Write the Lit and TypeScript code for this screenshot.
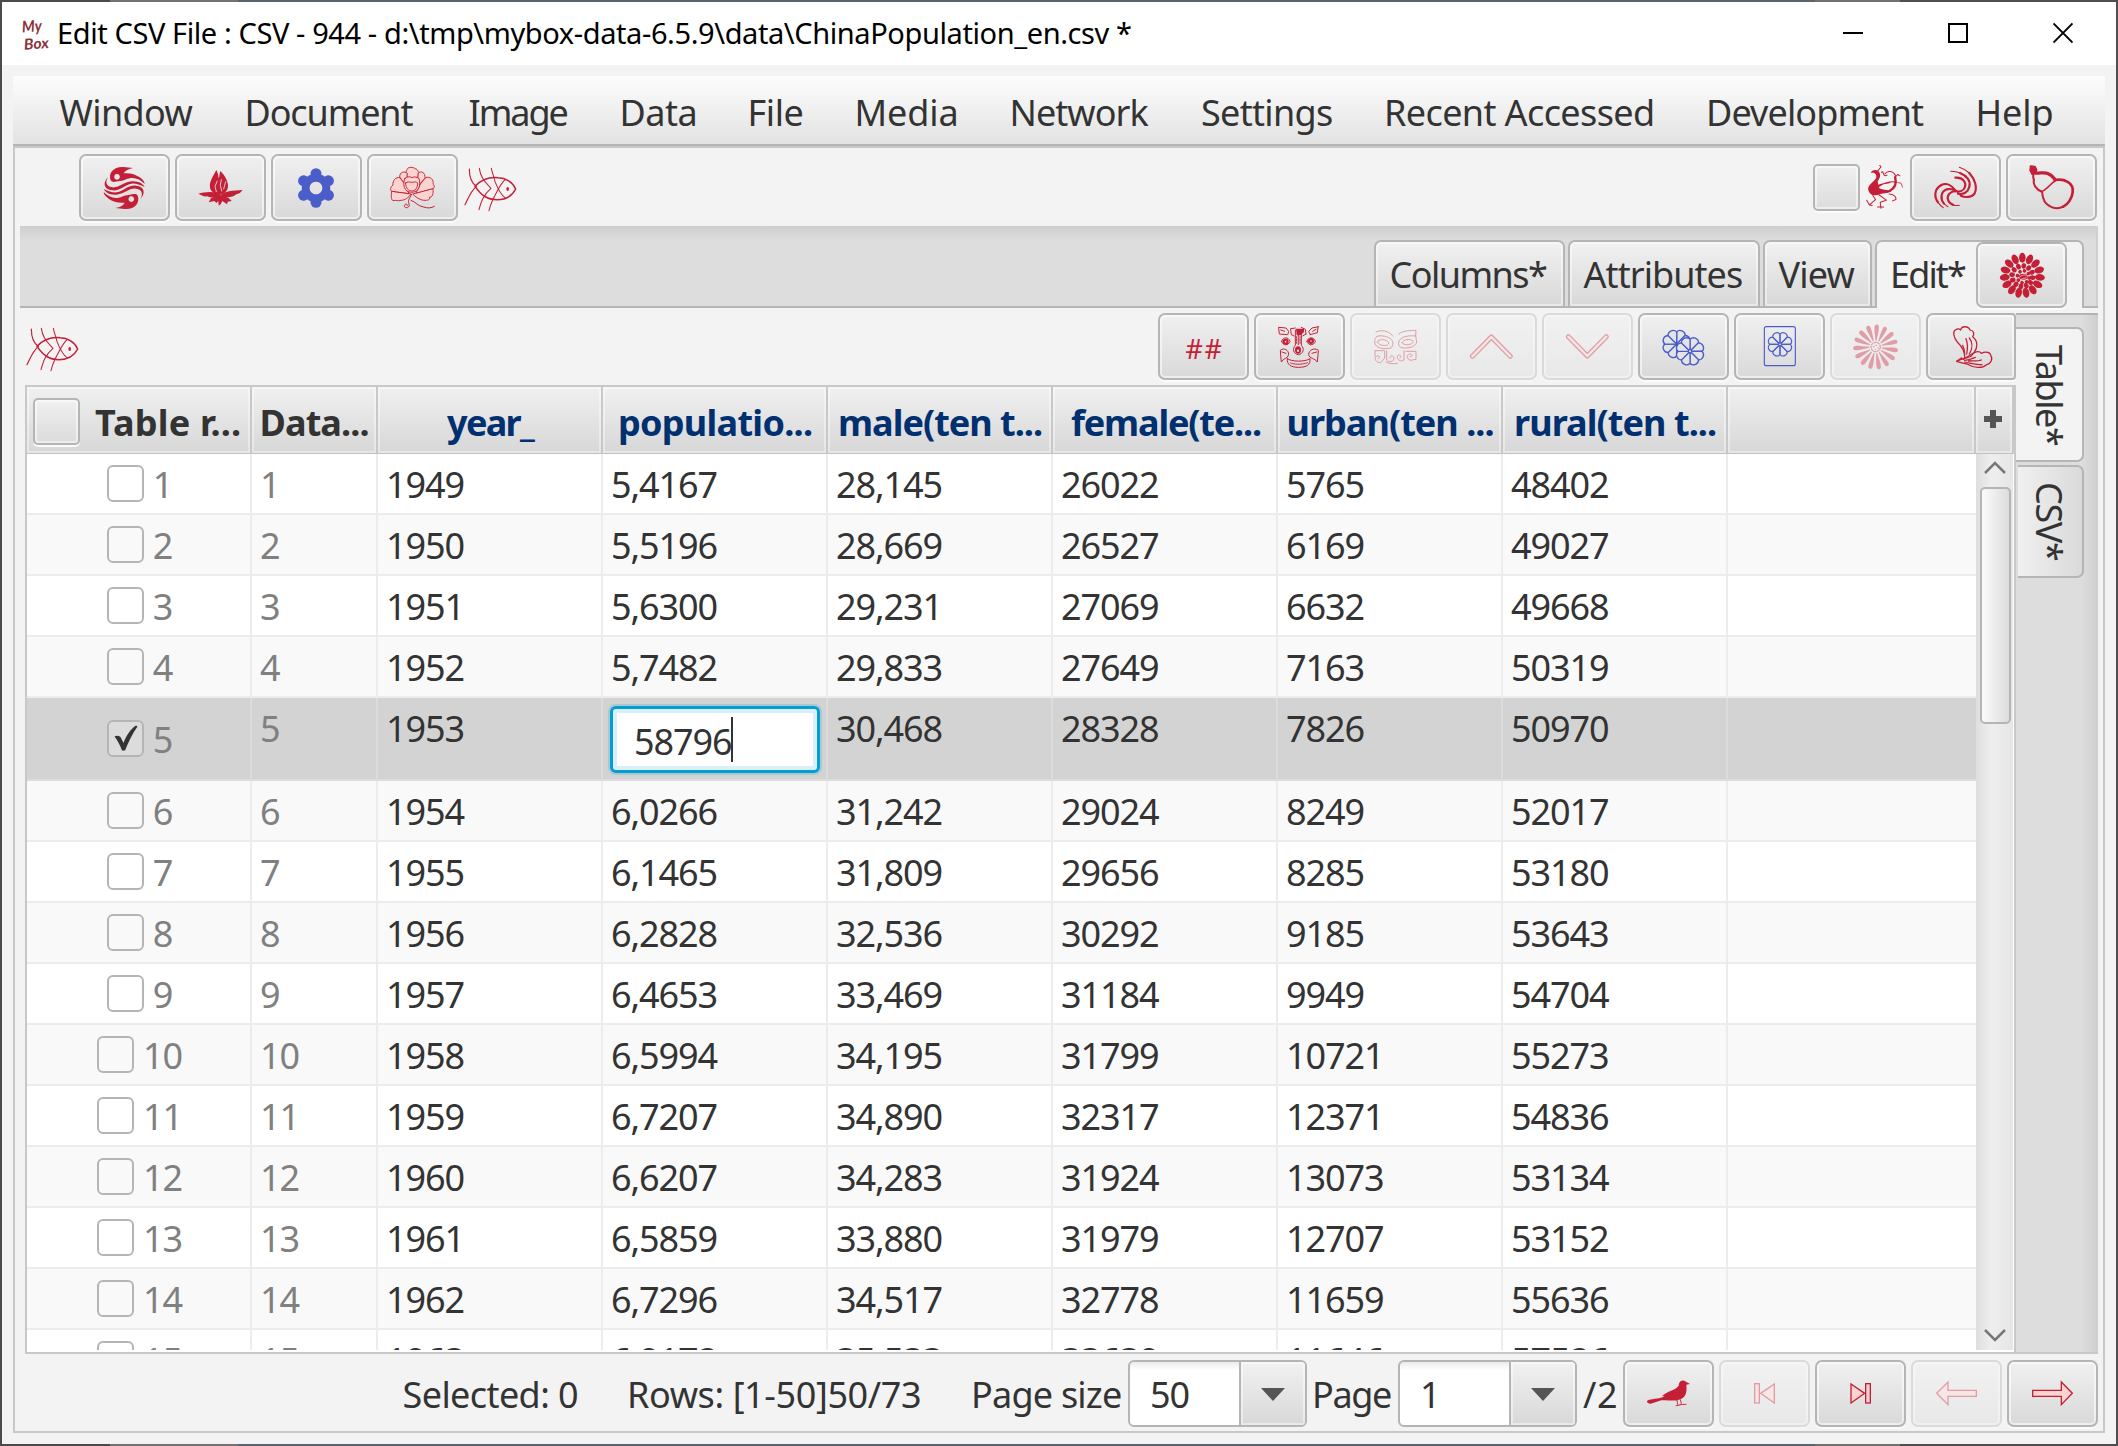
import { LitElement, html, svg, css } from "lit";
import { customElement } from "lit/decorators.js";
import { styleMap } from "lit/directives/style-map.js";
import { classMap } from "lit/directives/class-map.js";

const RED = "#c41f36";
const BLUE = "#4b5dc9";
const FAMILY = `"Noto Sans", "Open Sans", sans-serif`;
const pen = document.createElement("canvas").getContext("2d")!;

/** Text whose ink is spread over exactly `w` pixels. */
function fit(text: string, w: number, size = 36, weight = 400) {
  pen.font = `${weight} ${size}px ${FAMILY}`;
  const m = pen.measureText(text);
  const ink = m.actualBoundingBoxLeft + m.actualBoundingBoxRight;
  const ls = text.length > 1 ? (w - ink) / (text.length - 1) : 0;
  return html`<span class="fit" style=${styleMap({
    "inline-size": `${w}px`,
    "letter-spacing": `${ls.toFixed(3)}px`,
    "text-indent": `${m.actualBoundingBoxLeft.toFixed(2)}px`,
    "font-size": `${size}px`,
    "font-weight": `${weight}`,
  })}>${text}</span>`;
}

const ring = (n: number, cx: number, cy: number, draw: any, off = 0) =>
  Array.from({ length: n }, (_, i) => svg`<g transform="rotate(${off + (i * 360) / n} ${cx} ${cy})">${draw}</g>`);

const pic = (box: string, body: any, cls = "glyph") =>
  html`<svg class=${cls} viewBox=${box} fill="none" stroke=${RED} stroke-linecap="round" stroke-linejoin="round">${body}</svg>`;

const swirlHalf = svg`<path fill-rule="evenodd" d="M123 106C115 84 132 64 162 66L190 69C174 72 165 78 162 85C180 83 198 88 210 97C219 104 224 108 225 117C214 106 202 99 188 99C172 99 166 107 150 108C138 110 128 114 123 106ZM142 87a8.500 8.500 0 1 0 .1 0Z"/><path d="M116 96C106 108 108 125 128 127C150 129 160 111 186 109C206 107 221 117 225 126C210 119 198 115 186 116C164 119 154 138 128 136C102 135 98 111 116 96Z"/>`;

const wedge = (cx: number, cy: number, x: number, y: number, r: number) =>
  svg`<path d="M${cx} ${cy}L${cx - x} ${cy - y}A${r} ${r} 0 0 1 ${cx + x} ${cy - y}Z"/>`;

const petalP = "#fbd3cf";
const icons = {
  swirl: pic("28 27 273 201", svg`<g fill=${RED} stroke="none">${swirlHalf}<g transform="rotate(180 163.5 129)">${swirlHalf}</g></g>`),
  leaf: pic("316 27 273 201", svg`<g fill=${RED} stroke="none"><path d="M440 75C432 92 418 108 421 128C424 142 440 150 450 150C464 148 476 138 475 120C473 102 462 88 452 78C449 84 450 96 447 100C446 90 443 80 440 75Z"/><path d="M452 152C440 137 408 140 386 146C396 150 400 155 412 154C424 160 440 160 452 152Z"/><path d="M452 152C462 139 490 136 519 135C514 142 508 147 500 148C490 158 466 160 452 152Z"/><path d="M450 150L424 160L417 172L434 168L440 174L446 168L447 182L453 178L458 168L472 178L474 170L486 168L476 158Z"/></g><path stroke="#e8e6e6" stroke-width="2.5" d="M440 140L436 124L443 108M456 138L452 120L455 104M462 132L468 110"/>`),
  gear: pic("604 27 273 201", svg`<g fill=${BLUE} stroke="none">${ring(6, 739, 129, svg`<circle cx="739" cy="86" r="16.5"/>`)}<path fill-rule="evenodd" d="M739 86a43 43 0 1 0 .1 0ZM739 110a19 19 0 1 1 -.1 0Z"/></g>`),
  peony: pic("892 27 273 201", svg`<g fill=${petalP} stroke-width="2.8"><path d="M1010 90C1006 76 1014 74 1014 70C1022 64 1034 68 1036 71C1046 72 1048 84 1046 94L1028 118Z"/><path d="M1012 84C1004 78 990 80 990 96L1010 124Z"/><path d="M1046 84C1054 76 1068 82 1066 100L1044 124Z"/><path d="M990 98C978 94 968 108 970 120C960 128 962 134 966 140L1018 146L1004 116Z"/><path d="M1068 98C1080 92 1094 104 1090 118C1096 122 1094 128 1090 132L1038 146L1052 118Z"/><path d="M966 140C964 152 964 164 970 167C982 164 984 170 994 166C1006 166 1016 158 1024 148Z"/><path d="M1090 132C1092 146 1088 158 1080 156C1082 166 1072 166 1066 166C1054 166 1042 160 1030 148Z"/><path d="M1006 100C998 116 1002 142 1026 142C1048 142 1054 120 1048 100C1040 96 1034 94 1027 98C1020 94 1012 94 1006 100Z"/><path d="M1008 114C1014 108 1020 112 1026 112C1034 112 1038 108 1044 114C1044 130 1036 138 1027 138C1016 138 1008 130 1008 114Z"/></g><path stroke-width="3" d="M1026 148C1018 162 1014 168 1018 176C1022 188 1008 192 1004 184C1004 176 1014 174 1013 182M1024 166C1038 170 1044 184 1062 186C1074 190 1084 190 1094 184"/>`),
  fish: pic("1183 66 159 134", svg`<path stroke-width="4.6" d="M1216 124C1238 100 1262 96 1285 98C1308 98 1330 112 1338 132C1328 152 1312 164 1282 164C1252 164 1234 150 1216 124Z"/><path stroke-width="3.6" d="M1199 72C1199 98 1208 116 1220 124C1202 140 1196 160 1186 179"/><path stroke-width="3.1" d="M1229 70C1232 92 1240 106 1264 130C1240 150 1234 172 1228 194M1265 70C1268 86 1274 96 1276 110C1284 130 1294 150 1306 158M1306 104C1288 122 1280 146 1270 162C1264 176 1260 188 1258 197"/><ellipse cx="1314" cy="132" rx="4" ry="6" fill=${RED} stroke="none"/>`, "fish"),
  phoenix: pic("198 62 109 130", svg`<path fill=${RED} stroke="none" d="M212 86C214 76 228 74 234 80C246 92 236 104 232 112C236 118 232 126 240 132C252 136 264 136 274 138C268 146 250 144 240 148C222 156 206 150 204 132C206 118 222 112 228 100C230 90 224 82 212 86Z"/><path stroke-width="3" d="M232 80L242 68L238 62M244 84C250 74 246 100 260 92M254 88C262 76 280 80 286 96M286 96L292 90L298 94M222 134C244 120 262 108 282 112M228 128C240 112 262 120 272 112M266 148C280 148 288 156 286 164L276 168M218 152L226 164L208 180L200 166M208 180L216 182M236 150L258 166L240 172L242 190M232 186L250 186"/><path stroke-width="2.4" stroke-dasharray="8 3" d="M282 112L302 116L306 128"/><path stroke-width="7" d="M284 98C288 114 284 130 268 138"/>`, "phoenix"),
  whirl: pic("330 27 273 201", svg`<path stroke-width="6.500" d="M466 98C490 96 500 114 494 128C490 138 478 142 464 138M474 146C490 150 504 142 508 125C513 108 500 92 480 84M482 152C496 158 516 158 524 145C532 128 526 104 508 84M466 136C456 122 440 112 424 120C402 132 402 156 414 172M470 138C462 134 452 130 440 133C422 140 420 162 432 176M474 140C466 138 456 138 448 146C438 158 444 174 460 180"/><path stroke-width="3.200" d="M508 84C500 76 490 71 478 67M480 84C472 80 462 79 452 79M414 172C418 178 424 184 430 188M432 176C436 180 440 183 444 185M460 180C466 182 472 182 478 181"/>`),
  gourd: pic("618 27 273 201", svg`<path fill=${RED} stroke-width="4" d="M691 63L705 64L710 74L708 86L696 88L690 76Z"/><path stroke-width="10" stroke-linecap="butt" d="M706 84C718 86 734 80 744 86C756 90 760 98 766 105"/><path stroke-width="8" d="M764 105C792 100 822 112 818 142C816 160 804 178 790 185"/><path stroke-width="6" d="M790 184C770 198 736 184 730 160C726 150 728 144 726 140C708 134 698 118 702 104C698 98 700 92 700 88"/><path stroke-width="5" d="M724 140C742 134 750 116 766 107"/>`),
  mask: pic("372 249 273 201", svg`<g stroke-width="3"><path d="M446 292L468 294L476 304L474 312M446 294L448 312L472 314M452 300L464 304M566 290L546 294L536 304L540 312M564 292L562 308L540 314M558 298L548 304M482 296L496 294M514 292L526 298L528 312M482 298L484 314L492 318M528 312L518 318"/><path d="M496 300L496 346C486 356 490 372 505 374C520 372 524 356 514 346L514 300"/><path stroke-dasharray="5 3" d="M505 300L505 344M500 320L500 340M510 320L510 340"/><path d="M455 334C458 320 476 320 480 334C476 348 458 348 455 334ZM531 334C534 320 552 320 556 334C552 348 534 348 531 334Z"/><path d="M452 360C462 352 476 360 476 374C474 386 460 384 454 396L452 376ZM564 360C552 352 536 360 536 374C538 386 554 384 562 396L564 376ZM456 366L468 370M560 366L546 370M472 386C484 396 526 396 540 386C542 404 530 412 506 412C482 412 470 404 472 386Z"/><path stroke-dasharray="6 3" d="M482 399C494 404 518 404 532 398"/></g><g fill=${RED} stroke="none"><circle cx="467" cy="335" r="9"/><circle cx="543" cy="333" r="9"/><ellipse cx="504" cy="360" rx="9" ry="11"/><path d="M498 296H522V306L512 316H500Z"/></g><g fill="#e6e6e6" stroke="none"><circle cx="467" cy="335" r="2.500"/><circle cx="543" cy="333" r="2.500"/><circle cx="504" cy="362" r="3.5"/></g>`),
  eyes: pic("660 249 273 201", svg`<path stroke-width="3" d="M738 306C752 298 778 302 788 318M782 354C764 358 744 356 736 344C732 332 734 322 744 318C760 316 780 320 788 334C790 344 788 350 782 354M742 336C744 326 770 326 776 338C778 350 748 350 742 336M806 312C822 300 842 302 858 301L857 318M857 318C838 316 812 318 806 336C804 350 812 354 824 354C842 354 858 348 860 336C858 326 858 320 857 318M816 338C818 328 842 324 850 334C848 346 820 348 816 338M735 362L735 378M735 362H764V384L752 398C738 398 730 386 740 378C750 376 752 384 745 386M770 362V390C776 398 792 396 792 384C790 374 778 376 780 384M828 364H858V388L840 391C828 386 830 370 842 372C850 374 846 382 840 380M822 362V390C812 396 800 390 802 378C808 370 816 378 810 384M768 396C776 402 790 402 802 400"/>`),
  up: pic("948 249 273 201", svg`<path stroke-width="15" d="M1027 379L1084 321L1141 379"/><path stroke="#fbd9d4" stroke-width="7" d="M1027 379L1084 321L1141 379"/>`),
  down: pic("1236 249 273 201", svg`<path stroke-width="15" d="M1315 320L1372 378L1429 320"/><path stroke="#fbd9d4" stroke-width="7" d="M1315 320L1372 378L1429 320"/>`),
  copy: pic("54 249 273 201", svg`<g stroke=${BLUE} stroke-width="4" fill="#e4e4e6">${ring(8, 170, 342, wedge(170, 342, 14, 33, 15), 22.5)}${ring(8, 210, 364, wedge(210, 364, 14, 33, 15), 22.5)}<circle cx="210" cy="364" r="5"/></g>`),
  card: pic("342 249 273 201", svg`<g stroke=${BLUE} stroke-width="3.4"><rect x="433" y="290" width="93" height="117" rx="6"/>${ring(8, 480, 343, wedge(480, 343, 11.8, 28.5, 12.6), 22.5)}<circle cx="480" cy="343" r="4.500" fill="#e4e4e6"/></g>`),
  daisy: pic("630 249 273 201", svg`${ring(15, 767, 351, svg`<path fill=${RED} stroke="none" d="M765.500 332C764 318 759.500 304 760.500 290C762 281 772 281 773.500 290C774.500 304 770 318 768.500 332Z"/>`, 3)}<circle cx="767" cy="351" r="14" stroke-width="3.5" stroke-dasharray="6 4"/><path stroke-width="3.500" d="M760 350H762M768 346H770M774 354H776M766 358H767"/>`),
  petals: pic("918 249 273 201", svg`<g stroke-width="3.8"><path d="M1034 384C1036 366 1026 350 1012 336C1000 322 998 304 1006 300C1014 294 1020 298 1022 300C1024 288 1044 286 1050 300C1062 302 1064 312 1058 320C1074 332 1074 352 1062 368L1036 384"/><path d="M1034 372C1034 360 1030 350 1028 346M1040 372C1044 352 1042 336 1038 326M1048 372C1060 352 1056 334 1048 324"/><path d="M1010 394C1030 384 1040 386 1054 378C1060 364 1078 362 1084 370C1098 362 1112 368 1112 376C1120 386 1112 402 1100 404C1086 416 1062 414 1046 404C1034 400 1020 398 1010 394Z"/><path d="M1034 391C1048 390 1056 386 1066 382M1034 396C1056 400 1070 404 1086 404M1046 393C1060 392 1074 394 1084 390"/><path d="M1010 394L1024 384L1032 388"/></g>`),
  chrys: pic("1068 36 273 198", svg`<g fill=${RED} stroke="none">${ring(15, 1207, 135, svg`<ellipse cx="1207" cy="82" rx="9.800" ry="15"/>`)}${ring(12, 1207, 137, svg`<ellipse cx="1207" cy="106" rx="7" ry="8.500"/>`, 8)}${ring(8, 1210, 139, svg`<ellipse cx="1210" cy="121" rx="5.500" ry="5.500"/>`, 12)}<ellipse cx="1210" cy="139" rx="13" ry="9"/></g><path stroke="#eedcdc" stroke-width="2" d="M1200 140C1204 132 1216 132 1220 136M1204 146L1218 142"/>`),
  crow: pic("69 63 273 201", svg`<path fill=${RED} stroke="none" d="M141 186C152 178 176 182 194 172L186 171C202 156 226 154 236 140C236 126 248 120 258 128L270 135L259 137C262 160 256 178 236 182C222 188 204 182 184 184L152 194C144 194 140 190 141 186Z"/><path stroke-width="2.6" stroke-dasharray="6 2" d="M231 182L233 198M228 200L240 198M241 182L244 194M240 197L258 196"/>`),
  first: pic("357 63 273 201", svg`<g fill="#fbd3cf" stroke-width="4" stroke-linejoin="miter"><rect x="464" y="134" width="14" height="58"/><path d="M523 135V192L482 163Z"/></g>`),
  last: pic("645 63 273 201", svg`<g fill="#fbd3cf" stroke-width="4" stroke-linejoin="miter"><path d="M753 135V192L794 163Z"/><rect x="797" y="134" width="14" height="58"/></g>`),
  prev: pic("933 63 273 201", svg`<path fill="#fbd3cf" stroke-width="4" stroke-linejoin="miter" d="M1010 163L1044 129V154H1129V172H1044V197Z"/>`),
  next: pic("1221 63 273 201", svg`<path fill="#fbd3cf" stroke-width="4" stroke-linejoin="miter" d="M1417 163L1384 129V154H1298V172H1384V197Z"/>`),
};

const MENU: [string, number, number][] = [
  ["Window", 133, 0], ["Document", 166, 55], ["Image", 98, 56], ["Data", 73, 55], ["File", 52, 55], ["Media", 99, 55],
  ["Network", 136, 56], ["Settings", 130, 53.5], ["Recent Accessed", 266, 55], ["Development", 215, 56], ["Help", 74, 54.5],
];

const HEADS: [string, number][] = [
  ["year_", 88], ["populatio...", 192], ["male(ten t...", 202], ["female(te...", 190], ["urban(ten ...", 205], ["rural(ten t...", 200],
];

const ROWS = [
  ["1949", "5,4167", "28,145", "26022", "5765", "48402"],
  ["1950", "5,5196", "28,669", "26527", "6169", "49027"],
  ["1951", "5,6300", "29,231", "27069", "6632", "49668"],
  ["1952", "5,7482", "29,833", "27649", "7163", "50319"],
  ["1953", "58796", "30,468", "28328", "7826", "50970"],
  ["1954", "6,0266", "31,242", "29024", "8249", "52017"],
  ["1955", "6,1465", "31,809", "29656", "8285", "53180"],
  ["1956", "6,2828", "32,536", "30292", "9185", "53643"],
  ["1957", "6,4653", "33,469", "31184", "9949", "54704"],
  ["1958", "6,5994", "34,195", "31799", "10721", "55273"],
  ["1959", "6,7207", "34,890", "32317", "12371", "54836"],
  ["1960", "6,6207", "34,283", "31924", "13073", "53134"],
  ["1961", "6,5859", "33,880", "31979", "12707", "53152"],
  ["1962", "6,7296", "34,517", "32778", "11659", "55636"],
  ["1963", "6,9172", "35,533", "33639", "11646", "57526"],
];
const EDITED = 4;

@customElement("app-root")
export class AppRoot extends LitElement {
  static styles = css`
    :host { display: block; width: 2118px; height: 1446px; overflow: hidden; font-family: "Noto Sans", "Open Sans", sans-serif; font-size: 36px; color: #333; line-height: 49px;
      background: linear-gradient(90deg, #4c4a4b 0 110px, #757172 110px 238px, #5a646e 238px 1815px, #747070 1815px 1900px, #504e4f 1900px); }
    * { box-sizing: border-box; }
    .fit { display: inline-block; white-space: pre; flex: none; }
    .desk { padding: 2px; height: 1446px; }
    .win { height: 1442px; background: #f3f3f3; display: flex; flex-direction: column; }
    .title { height: 63px; background: #fff; display: flex; align-items: center; padding: 0 43px 0 18px; color: #000; flex: none; }
    .logo { width: 30px; height: 36px; margin: 0 9px 0 0; flex: none; overflow: visible; }
    .title .fit { margin-top: -3px; }
    .controls { margin-left: auto; display: flex; gap: 85px; margin-top: -2px; }
    .controls svg { width: 20px; height: 22px; display: block; }
    .body { padding: 11px 11px; display: flex; flex-direction: column; flex: 1; min-height: 0; }
    .menu { height: 70px; flex: none; display: flex; align-items: flex-start; padding: 12px 0 0 46.5px; background: linear-gradient(#fdfdfd, #e3e3e3 97%); border-bottom: 2px solid #b5b5b5; }
    .menu .fit { margin-left: var(--gap); }
    .panel { flex: 1; min-height: 0; border: 2px solid #c8c8c8; padding: 0 5px; display: flex; flex-direction: column; }
    .tools { height: 78px; flex: none; display: flex; align-items: flex-start; gap: 5px; padding: 6px 1px 0 59px; }
    .btn { width: 91px; height: 67px; flex: none; border-radius: 7px; display: flex; align-items: center; justify-content: center; background: linear-gradient(#f1f1f1, #d8d8d8);
      box-shadow: inset 0 0 0 2px #b5b5b5, inset 0 0 0 4px rgba(255,255,255,.55), 0 2px 0 #fbfbfb; }
    .btn.off { opacity: .4; }
    .glyph { width: 91px; height: 67px; display: block; flex: none; }
    .hash { color: #c41f36; display: flex; padding-top: 3px; }
    .fish { width: 53px; height: 44.7px; margin: 13px 0 0 19px; flex: none; }
    .tools .fish { margin: 13px 0 0 1px; }
    .tools .sel { margin: 10px 0 0 auto; }
    .sel { width: 47px; height: 47px; flex: none; border-radius: 5px; background: linear-gradient(#f1f1f1, #dadada); box-shadow: inset 0 0 0 2px #b5b5b5, inset 0 0 0 4px rgba(255,255,255,.5), 0 2px 0 #fbfbfb; }
    .phoenix { width: 37px; height: 44px; margin: 11px 2px 0 1px; }
    .tabs { height: 82px; flex: none; display: flex; justify-content: flex-end; align-items: flex-end; gap: 3px; padding-right: 14.5px; background: linear-gradient(#cecece, #dddddd 14px); box-shadow: inset 0 -2px 0 #b5b5b5, inset -2px 0 0 #cfcfcf; }
    .tab { height: 68px; flex: none; border: 2px solid #b5b5b5; border-radius: 7px 7px 0 0; background: linear-gradient(#f1f1f1, #d8d8d8); box-shadow: inset 0 0 0 2px rgba(255,255,255,.45); display: flex; padding: 8px 15.5px 0 14px; }
    .tab:first-child { padding-left: 16px; }
    .tab.on { background: #f3f3f3; border-bottom: none; padding: 0 15px 0 16px; width: 208.5px; box-shadow: none; }
    .tab.on .fit { margin: 8px 10px 0 0; }
    .tab.on .btn { height: 66px; width: 91px; }
    .main { flex: 1; min-height: 0; display: flex; }
    .left { width: 1996px; flex: none; display: flex; flex-direction: column; }
    .edit { height: 77px; flex: none; display: flex; align-items: flex-start; gap: 5px; padding: 5px 0 0 0; overflow: hidden; }
    .edit .fish { margin: 14px auto 0 6px; }
    .edit .last { width: 90px; margin: 0; border-radius: 7px 4px 4px 7px; justify-content: flex-start; }
    .table { flex: 1; min-height: 0; margin-left: 5px; border: 2px solid #c8c8c8; background: #fff; display: flex; flex-direction: column; overflow: hidden; padding-bottom: 2px; }
    .head { height: 67px; flex: none; display: grid; grid-template-columns: 225px 126px repeat(6, 225px) 248px 1fr; }
    .h { background: linear-gradient(#f0f0f0, #d7d7d7); border-right: 2px solid #c8c8c8; border-bottom: 1px solid #c0c0c0; box-shadow: inset 0 0 0 2px rgba(255,255,255,.4); display: flex; align-items: center; justify-content: center; color: #003070; overflow: hidden; padding: 4px 0 0 3px; }
    .h.dark { color: #333; }
    .h.first { justify-content: flex-start; padding-left: 6px; gap: 15px; }
    .h.first .sel { margin-top: -2px; }
    .h.first .fit { width: 144px; }
    .h svg { width: 18px; height: 18px; margin: -7px 0 0 -5px; }
    .split { flex: 1; min-height: 0; display: flex; }
    .grid { width: 1949px; overflow: hidden; flex: none; }
    .row { height: 61px; display: grid; grid-template-columns: 225px 126px repeat(6, 225px) 1fr; background: #fff; }
    .row.alt { background: #f9f9f9; }
    .row.hot { height: 83px; background: #d3d3d3; }
    .c { border-right: 2px solid #ececec; border-bottom: 2px solid #ececec; padding: 6px 0 0 8px; letter-spacing: -1.12px; white-space: nowrap; }
    .hot .c { border-color: #dcdcdc; }
    .c.num { color: #808080; }
    .c.pick { display: flex; align-items: center; justify-content: center; gap: 9px; padding: 1px 0 0 2px; color: #808080; }
    .c.field { padding: 8px 6px 0 7px; }
    .c.end { border-right: none; }
    .box { width: 37px; height: 37px; border: 2px solid #b5b5b5; border-radius: 6px; flex: none; display: block; margin-top: -2px; }
    .box svg { width: 33px; height: 33px; display: block; }
    .hot .box { background: #dcdcdc; }
    .input { height: 67px; border: 3px solid #039ed3; border-radius: 6px; background: #fff; box-shadow: inset 0 0 0 4px #d9f0f9, 0 0 0 2px rgba(3,158,211,.2); padding: 8px 0 0 21px; display: flex; color: #333; }
    .caret { width: 2px; height: 45px; background: #333; margin-left: 0; }
    .bar { flex: 1; display: flex; flex-direction: column; align-items: center; background: linear-gradient(90deg, #dedede, #eeeeee 40%, #e6e6e6); margin-right: 1px; padding: 7px 0 8px 1px; }
    .bar svg { width: 24px; height: 13px; flex: none; }
    .thumb { width: 31px; height: 237px; margin: 13px 0 auto 1px; border: 2px solid #b5b5b5; border-radius: 5px; background: linear-gradient(90deg, #fbfbfb, #dcdcdc); }
    .side { flex: 1; margin-top: 5px; background: linear-gradient(90deg, #dddddd 0 66px, #cecece); border-top: 2px solid #b5b5b5; border-bottom: 2px solid #c8c8c8; padding: 12px 14.5px 0 0; display: flex; flex-direction: column; gap: 3px; }
    .vtab { writing-mode: vertical-rl; border: 2px solid #b5b5b5; border-left: none; border-radius: 0 7px 7px 0; display: flex; align-items: flex-start; padding: 17px 8px 0 0; height: 113px; background: linear-gradient(90deg, #f0f0f0, #dadada); margin-left: 2px; }
    .vtab.on { height: 135px; padding-top: 16px; background: #f3f3f3; margin-left: 0; }
    .vtab .fit { line-height: 49px; }
    .foot { height: 77px; flex: none; display: flex; justify-content: flex-end; align-items: center; padding-top: 1px; }
    .foot > .fit { margin-top: 2px; }
    .foot .btn { margin-left: 5px; }
    .g1 { width: 53px; } .g2 { width: 54px; } .g3 { width: 8px; } .g4 { width: 6px; } .g5 { width: 2px; } .g6 { width: 7px; }
    .combo { width: 179px; height: 67px; border: 2px solid #b5b5b5; border-radius: 6px; display: flex; background: linear-gradient(#ebebeb, #fff 8px); overflow: hidden; flex: none; }
    .combo .val { width: 109px; padding: 8px 0 0 20px; letter-spacing: -1.19px; }
    .combo .arrow { flex: 1; border-left: 2px solid #b5b5b5; background: linear-gradient(#f1f1f1, #d8d8d8); box-shadow: inset 0 0 0 2px rgba(255,255,255,.45); display: flex; align-items: center; justify-content: center; }
    .arrow svg { width: 24px; height: 13px; margin: 2px 1px 0 0; }
  `;

  private btn(icon: any, off = false, extra = "") {
    return html`<span class="btn ${off ? "off" : ""} ${extra}">${icon}</span>`;
  }

  private combo(value: string) {
    return html`<div class="combo"><span class="val">${value}</span><span class="arrow"><svg viewBox="0 0 24 13"><path fill="#555" d="M0 0H24L12 13Z"/></svg></span></div>`;
  }

  private row(cells: string[], i: number) {
    const hot = i === EDITED;
    return html`<div class=${classMap({ row: true, alt: i % 2 === 1, hot })}>
      <div class="c pick"><span class="box">${hot ? html`<svg viewBox="0 0 33 33"><path fill="#333" d="M5.500 14.500C8 13 11.500 13.500 12.500 17L14.500 21C17.500 13 22 6.500 27 3.500L28.500 4.500C23 12 19.500 20 16 28.500H13C11 23 8.500 18.500 5.500 14.500Z"/></svg>` : ""}</span><span>${i + 1}</span></div>
      <div class="c num">${i + 1}</div>
      ${cells.map((v, k) => hot && k === 1
        ? html`<div class="c field"><div class="input"><span>${v}</span><i class="caret"></i></div></div>`
        : html`<div class="c">${v}</div>`)}
      <div class="c end"></div>
    </div>`;
  }

  render() {
    return html`<div class="desk"><div class="win">
      <div class="title">
        <svg class="logo" viewBox="0 0 30 36" fill="#8c3138" font-family="Lato, sans-serif" font-style="italic" font-weight="700">
          <text x="2" y="16" font-size="16" textLength="20" lengthAdjust="spacingAndGlyphs" transform="rotate(-4 10 12)">My</text>
          <text x="4" y="33" font-size="15" textLength="25" lengthAdjust="spacingAndGlyphs" transform="rotate(-4 14 30)">Box</text>
        </svg>
        ${fit("Edit CSV File : CSV - 944 - d:\\tmp\\mybox-data-6.5.9\\data\\ChinaPopulation_en.csv *", 1072, 29)}
        <div class="controls">
          <svg viewBox="0 0 20 22"><path d="M0 11H20" stroke="#000" stroke-width="2"/></svg>
          <svg viewBox="0 0 20 22"><rect x="1" y="2" width="18" height="18" fill="none" stroke="#000" stroke-width="2"/></svg>
          <svg viewBox="0 0 20 22"><path d="M.5 1.500L19.500 20.500M19.500 1.500L.5 20.500" stroke="#000" stroke-width="1.800"/></svg>
        </div>
      </div>
      <div class="body">
        <div class="menu">${MENU.map(([n, w, g]) => html`<span style=${styleMap({ "--gap": `${g}px` })}>${fit(n, w)}</span>`)}</div>
        <div class="panel">
          <div class="tools">
            ${this.btn(icons.swirl)}${this.btn(icons.leaf)}${this.btn(icons.gear)}${this.btn(icons.peony)}${icons.fish}
            <span class="sel"></span>${icons.phoenix}${this.btn(icons.whirl)}${this.btn(icons.gourd)}
          </div>
          <div class="tabs">
            <div class="tab">${fit("Columns*", 155.5)}</div>
            <div class="tab">${fit("Attributes", 158.5)}</div>
            <div class="tab">${fit("View", 76)}</div>
            <div class="tab on">${fit("Edit*", 73)}${this.btn(icons.chrys)}</div>
          </div>
          <div class="main">
            <div class="left">
              <div class="edit">
                ${icons.fish}
                ${this.btn(html`<span class="hash">${fit("##", 36, 27)}</span>`)}${this.btn(icons.mask)}${this.btn(icons.eyes, true)}${this.btn(icons.up, true)}
                ${this.btn(icons.down, true)}${this.btn(icons.copy)}${this.btn(icons.card)}${this.btn(icons.daisy, true)}${this.btn(icons.petals, false, "last")}
              </div>
              <div class="table">
                <div class="head">
                  <div class="h dark first"><span class="sel"></span>${fit("Table r...", 145, 36, 700)}</div>
                  <div class="h dark">${fit("Data...", 106, 36, 700)}</div>
                  ${HEADS.map(([n, w]) => html`<div class="h">${fit(n, w, 36, 700)}</div>`)}
                  <div class="h"></div>
                  <div class="h"><svg viewBox="0 0 18 18"><path fill="#555" d="M6 0H12V6H18V12H12V18H6V12H0V6H6Z"/></svg></div>
                </div>
                <div class="split">
                  <div class="grid">${ROWS.map((r, i) => this.row(r, i))}</div>
                  <div class="bar">
                    <svg viewBox="0 0 24 13"><path d="M2 12L12 2L22 12" fill="none" stroke="#777" stroke-width="2.500"/></svg>
                    <div class="thumb"></div>
                    <svg viewBox="0 0 24 13"><path d="M2 1L12 11L22 1" fill="none" stroke="#777" stroke-width="2.500"/></svg>
                  </div>
                </div>
              </div>
            </div>
            <div class="side">
              <div class="vtab on">${fit("Table*", 101)}</div>
              <div class="vtab">${fit("CSV*", 77)}</div>
            </div>
          </div>
          <div class="foot">
            ${fit("Selected: 0", 173.5)}<i class="g1"></i>${fit("Rows: [1-50]50/73", 290)}<i class="g2"></i>${fit("Page size", 147)}<i class="g6"></i>
            ${this.combo("50")}<i class="g3"></i>${fit("Page", 76)}<i class="g6"></i>${this.combo("1")}<i class="g4"></i>${fit("/2", 33)}<i class="g5"></i>
            ${this.btn(icons.crow)}${this.btn(icons.first, true)}${this.btn(icons.last)}${this.btn(icons.prev, true)}${this.btn(icons.next)}
          </div>
        </div>
      </div>
    </div></div>`;
  }
}
